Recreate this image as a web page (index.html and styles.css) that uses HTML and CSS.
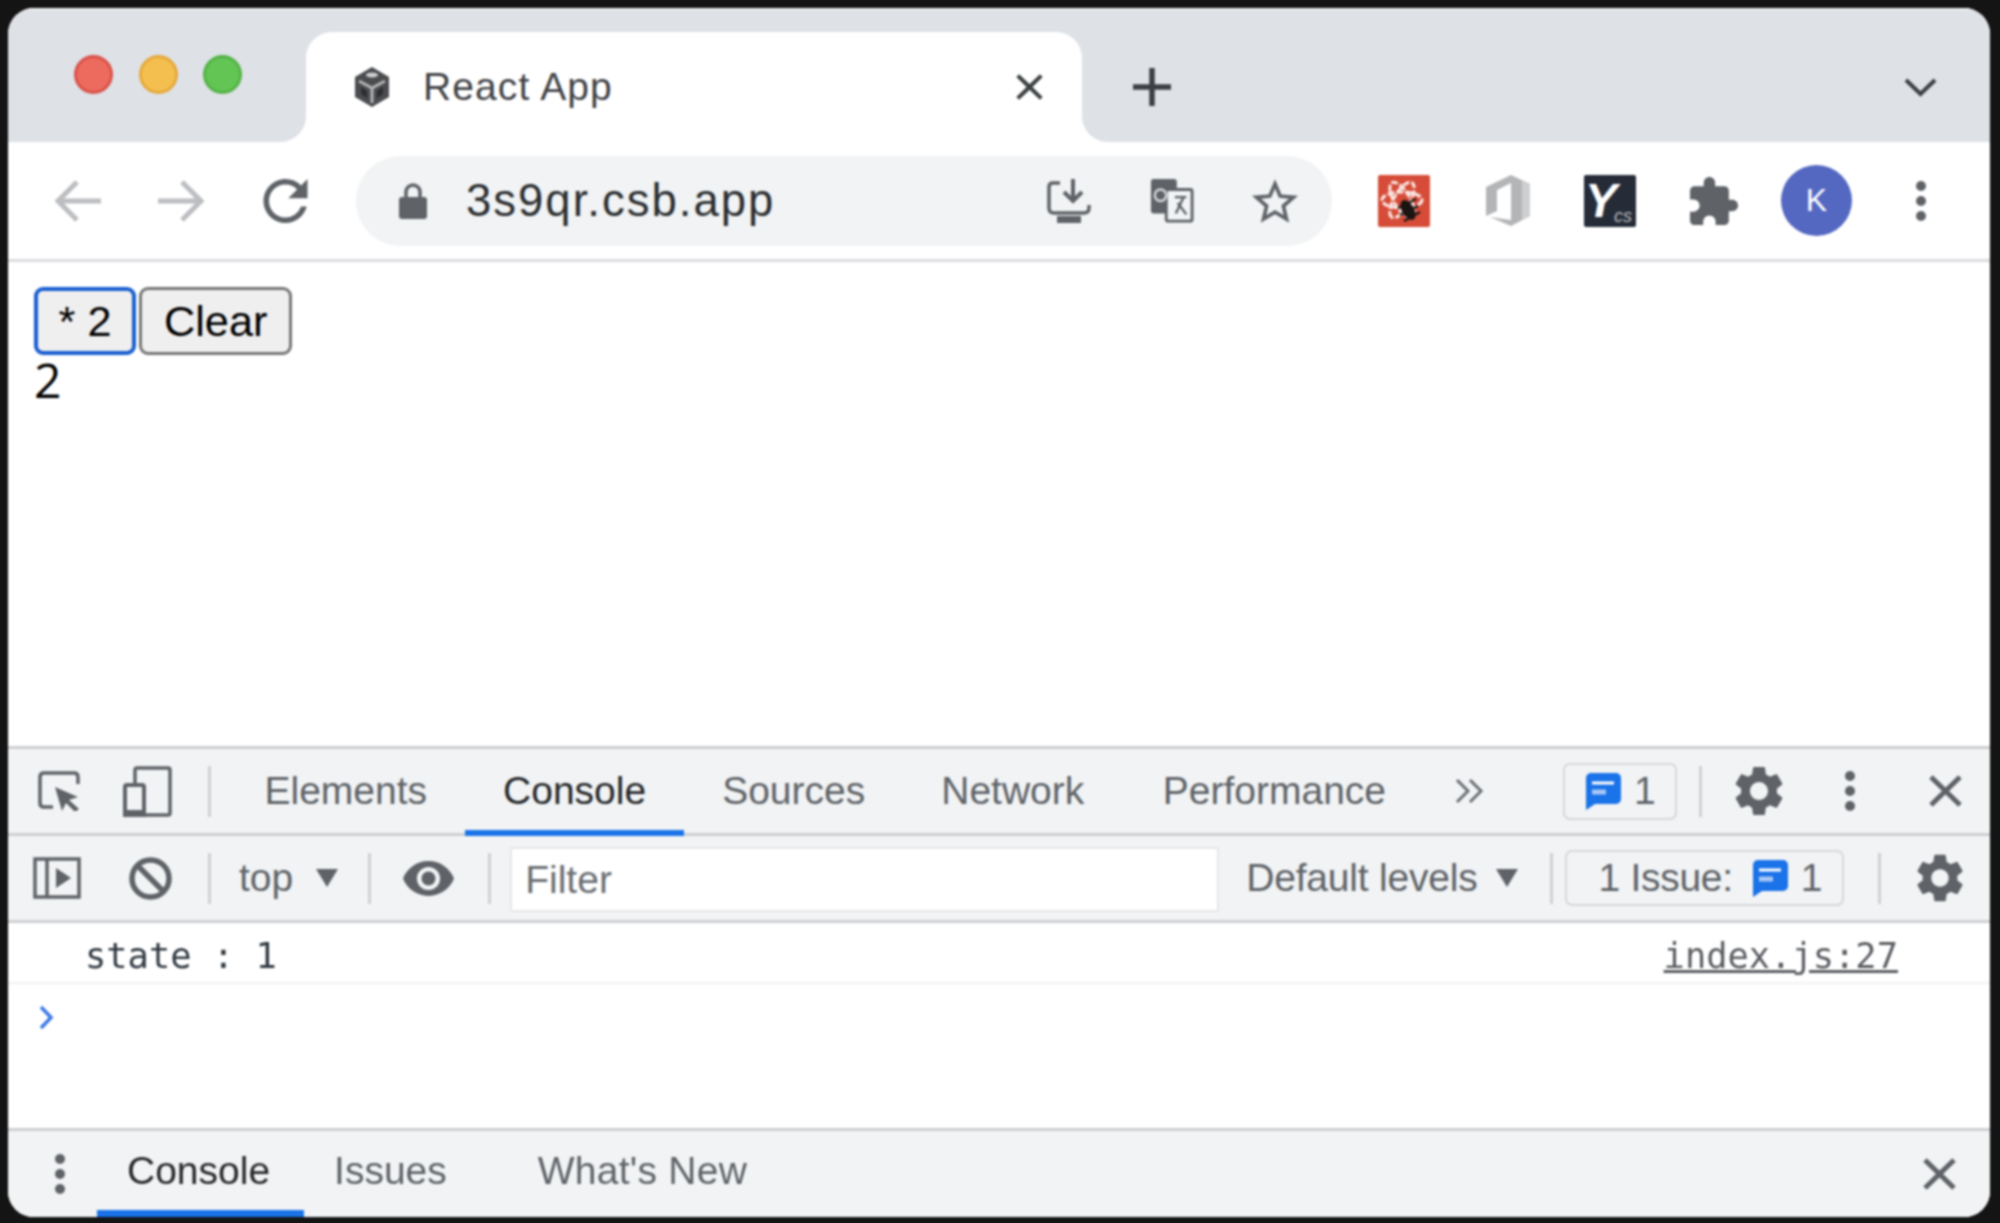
FILE: index.html
```html
<!DOCTYPE html>
<html lang="en">
<head>
<meta charset="utf-8">
<title>React App</title>
<link rel="stylesheet" href="styles.css">
</head>
<body>
<svg class="defs" width="0" height="0" aria-hidden="true">
  <symbol id="gear" viewBox="0 0 24 24"><path d="M19.14 12.94c.04-.3.06-.61.06-.94 0-.32-.02-.64-.07-.94l2.03-1.58a.49.49 0 0 0 .12-.61l-1.92-3.32a.488.488 0 0 0-.59-.22l-2.39.96c-.5-.38-1.03-.7-1.62-.94l-.36-2.54a.484.484 0 0 0-.48-.41h-3.84c-.24 0-.43.17-.47.41l-.36 2.54c-.59.24-1.13.57-1.62.94l-2.39-.96c-.22-.08-.47 0-.59.22L2.74 8.87c-.12.21-.08.47.12.61l2.03 1.58c-.05.3-.09.63-.09.94s.02.64.07.94l-2.03 1.58a.49.49 0 0 0-.12.61l1.92 3.32c.12.22.37.29.59.22l2.39-.96c.5.38 1.03.7 1.62.94l.36 2.54c.05.24.24.41.48.41h3.84c.24 0 .44-.17.47-.41l.36-2.54c.59-.24 1.13-.56 1.62-.94l2.39.96c.22.08.47 0 .59-.22l1.92-3.32c.12-.22.07-.47-.12-.61l-2.01-1.58zM12 15.6c-1.98 0-3.6-1.62-3.6-3.6s1.62-3.6 3.6-3.6 3.6 1.62 3.6 3.6-1.62 3.6-3.6 3.6z"/></symbol>
  <symbol id="dots" viewBox="0 0 12 42"><circle cx="6" cy="6" r="5"/><circle cx="6" cy="21" r="5"/><circle cx="6" cy="36" r="5"/></symbol>
  <symbol id="cross" viewBox="0 0 33 32"><path d="M2 2 31 30M31 2 2 30" fill="none" stroke="currentColor" stroke-width="5"/></symbol>
  <symbol id="chat" viewBox="0 0 35 37"><path d="M5 0h25a5 5 0 0 1 5 5v21a5 5 0 0 1-5 5H9l-9 6V5a5 5 0 0 1 5-5z" fill="#1a73e8"/><path d="M6 10h22" stroke="#fff" stroke-width="3"/><path d="M6 19h14" stroke="#a9c8f5" stroke-width="5"/></symbol>
  <symbol id="caret" viewBox="0 0 22 18"><path d="M0 0h22L11 18z"/></symbol>
</svg>

<div class="window">
  <header class="tabstrip">
    <div class="lights">
      <span class="light light-red"></span>
      <span class="light light-yellow"></span>
      <span class="light light-green"></span>
    </div>
    <div class="tab">
      <svg class="favicon" viewBox="0 0 40 40">
        <path d="M20 0 37 10V30L20 40 3 30V10z" fill="#4a4c4f"/>
        <ellipse cx="20" cy="8" rx="6" ry="2.500" fill="#cfcfcf"/>
        <path d="M20 21V36M7 14 20 21 33 14" stroke="#b4b4b4" stroke-width="3" fill="none"/>
        <path d="M9 20 15 24V31L9 27zM31 20 25 24V31L31 27z" fill="#2c2e30"/>
      </svg>
      <span class="tab-title">React App</span>
      <svg class="tab-close"><use href="#cross"/></svg>
    </div>
    <div class="strip-tools">
      <svg class="new-tab" viewBox="0 0 38 38"><path d="M19 0V38M0 19H38" stroke="#3c4043" stroke-width="5.500"/></svg>
      <svg class="tab-list" viewBox="0 0 33 19"><path d="M2 2 16.500 16 31 2" fill="none" stroke="#3c4043" stroke-width="4"/></svg>
    </div>
  </header>

  <nav class="toolbar">
    <svg class="nav-icon" viewBox="0 0 47 44"><path d="M47 22H5M23 3 4 22 23 41" fill="none" stroke="#bcbec1" stroke-width="5"/></svg>
    <svg class="nav-icon nav-next" viewBox="0 0 47 44"><path d="M0 22H42M24 3 43 22 24 41" fill="none" stroke="#bcbec1" stroke-width="5"/></svg>
    <svg class="nav-icon nav-next" viewBox="4 4 16 16"><path fill="#5f6368" d="M17.650 6.350A7.958 7.958 0 0 0 12 4c-4.420 0-7.990 3.580-7.990 8s3.570 8 7.990 8c3.730 0 6.840-2.550 7.730-6h-2.080A5.990 5.990 0 0 1 12 18c-3.310 0-6-2.690-6-6s2.690-6 6-6c1.660 0 3.140.69 4.220 1.780L13 11h7V4l-2.350 2.350z"/></svg>
    <div class="omnibox">
      <svg class="lock" viewBox="0 0 28 36"><rect y="14" width="28" height="22" rx="3" fill="#5f6368"/><path d="M7 16V9a7 7 0 0 1 14 0v7" fill="none" stroke="#5f6368" stroke-width="3.500"/></svg>
      <span class="url">3s9qr.csb.app</span>
      <div class="omni-actions">
        <svg class="omni-icon" viewBox="0 0 46 44"><path d="M14 4H7Q3 4 3 8V29Q3 34 8 34H38Q43 34 43 29V26" fill="none" stroke="#5f6368" stroke-width="3.500"/><path d="M27 0V21M18 13 27 22 36 13" fill="none" stroke="#5f6368" stroke-width="4"/><rect x="11" y="37" width="24" height="7" fill="#5f6368"/></svg>
        <svg class="omni-icon" viewBox="0 0 46 46"><rect x="1" width="27" height="36" rx="3" fill="#5f6368"/><rect x="17" y="11" width="27" height="33" rx="2" fill="#f1f3f4" stroke="#5f6368" stroke-width="3"/><circle cx="11" cy="17" r="6" fill="none" stroke="#d5d7d9" stroke-width="2.500"/><path d="M26 19H38M35 19 27 36M29 25 38 37" fill="none" stroke="#5f6368" stroke-width="2.500"/></svg>
        <svg class="omni-icon" viewBox="2 2 20 19"><path fill="#5f6368" d="M22 9.240l-7.190-.62L12 2 9.190 8.630 2 9.240l5.460 4.730L5.820 21 12 17.270 18.180 21l-1.630-7.030L22 9.240zM12 15.400l-3.760 2.270 1-4.280-3.320-2.880 4.380-.38L12 6.100l1.710 4.040 4.380.38-3.320 2.880 1 4.280L12 15.400z"/></svg>
      </div>
    </div>
    <svg class="ext ext-bug" viewBox="0 0 52 52">
      <rect width="52" height="52" rx="2" fill="#d64c38"/>
      <g fill="none" stroke="#fbe9e6" stroke-width="3" stroke-dasharray="7 2">
        <ellipse cx="24" cy="25" rx="20" ry="8"/>
        <ellipse cx="24" cy="25" rx="20" ry="8" transform="rotate(60 24 25)"/>
        <ellipse cx="24" cy="25" rx="20" ry="8" transform="rotate(120 24 25)"/>
      </g>
      <ellipse cx="30" cy="35" rx="6" ry="11" fill="#1b1512" transform="rotate(-30 30 35)"/>
      <path d="M20 33 38 24M22 40 40 31M26 46 42 37" stroke="#1b1512" stroke-width="2.500"/>
    </svg>
    <svg class="ext ext-office" viewBox="0 0 44 51">
      <path d="M25 0 44 9V41L25 51 4 42 25 45V8L11 15V36L0 41V12z" fill="#b3b5b7"/>
      <path d="M36 6 44 9V41L36 45z" fill="#cdcfd1"/>
    </svg>
    <svg class="ext ext-yoast" viewBox="0 0 52 52">
      <rect width="52" height="52" rx="2" fill="#252c38"/>
      <text class="ext-y" x="1" y="42">Y</text>
      <text class="ext-cs" x="30" y="47">cs</text>
    </svg>
    <svg class="ext ext-puzzle" viewBox="2 1 21 21"><path fill="#5f6368" d="M20.500 11H19V7c0-1.100-.9-2-2-2h-4V3.500C13 2.120 11.880 1 10.500 1S8 2.120 8 3.500V5H4c-1.100 0-1.990.9-1.990 2v3.800H3.500c1.490 0 2.700 1.210 2.700 2.700s-1.210 2.700-2.700 2.700H2V20c0 1.100.9 2 2 2h3.800v-1.500c0-1.490 1.210-2.700 2.700-2.700 1.490 0 2.700 1.210 2.700 2.700V22H17c1.100 0 2-.9 2-2v-4h1.500c1.380 0 2.500-1.120 2.500-2.500S21.880 11 20.500 11z"/></svg>
    <span class="avatar">K</span>
    <svg class="menu-dots"><use href="#dots"/></svg>
  </nav>

  <main class="page">
    <div class="page-buttons">
      <button class="btn btn-focus" type="button">* 2</button>
      <button class="btn" type="button">Clear</button>
    </div>
    <div class="count">2</div>
  </main>

  <section class="devtools">
    <div class="dt-tabs">
      <svg class="dt-inspect" viewBox="0 0 44 40"><path d="M15 36H6Q2 36 2 32V6Q2 2 6 2H36Q40 2 40 6V13" fill="none" stroke="#5f6368" stroke-width="3.500"/><path d="M17 16 40 26 31 29 41 38 37 41 28 32 24 40z" fill="#5f6368"/></svg>
      <svg class="dt-device" viewBox="0 0 49 51"><path d="M12 17V4Q12 2 14 2H45Q47 2 47 4V47Q47 49 45 49H22" fill="none" stroke="#5f6368" stroke-width="3.500"/><rect x="2" y="19" width="19" height="30" rx="2" fill="none" stroke="#5f6368" stroke-width="4"/><rect x="0" y="44" width="23" height="7" fill="#5f6368"/></svg>
      <span class="dt-sep dt-sep-first"></span>
      <div class="dt-tablist">
        <span class="dt-tab">Elements</span>
        <span class="dt-tab dt-tab-active">Console</span>
        <span class="dt-tab">Sources</span>
        <span class="dt-tab">Network</span>
        <span class="dt-tab dt-tab-perf">Performance</span>
      </div>
      <svg class="dt-more" viewBox="0 0 30 26"><path d="M2 2 13 13 2 24M15 2 26 13 15 24" fill="none" stroke="#6c7074" stroke-width="3"/></svg>
      <div class="dt-badge">
        <svg class="chat"><use href="#chat"/></svg>
        <span>1</span>
      </div>
      <span class="dt-sep dt-sep-badge"></span>
      <svg class="gear gear-top"><use href="#gear"/></svg>
      <svg class="dt-dots"><use href="#dots"/></svg>
      <svg class="dt-close"><use href="#cross"/></svg>
    </div>

    <div class="dt-filter">
      <svg class="dt-sidebar" viewBox="0 0 48 42"><rect x="2" y="2" width="44" height="38" fill="none" stroke="#5f6368" stroke-width="3.500"/><path d="M14 2V40" stroke="#5f6368" stroke-width="3.500"/><path d="M23 11 38 21 23 31z" fill="#5f6368"/></svg>
      <svg class="dt-block" viewBox="0 0 43 43"><circle cx="21.500" cy="21.500" r="18.500" fill="none" stroke="#5f6368" stroke-width="5.500"/><path d="M8 8 35 35" stroke="#5f6368" stroke-width="5.500"/></svg>
      <span class="dt-sep dt-sep-block"></span>
      <span class="dt-top">top</span>
      <svg class="caret caret-top"><use href="#caret"/></svg>
      <span class="dt-sep dt-sep-top"></span>
      <svg class="dt-eye" viewBox="1 4.500 22 15"><path fill="#5f6368" d="M12 4.500C7 4.500 2.730 7.610 1 12c1.730 4.390 6 7.500 11 7.500s9.270-3.110 11-7.500c-1.730-4.390-6-7.500-11-7.500zM12 17c-2.760 0-5-2.240-5-5s2.240-5 5-5 5 2.240 5 5-2.240 5-5 5zm0-8c-1.660 0-3 1.340-3 3s1.340 3 3 3 3-1.340 3-3-1.340-3-3-3z"/></svg>
      <span class="dt-sep dt-sep-eye"></span>
      <div class="dt-input">Filter</div>
      <span class="dt-levels">Default levels</span>
      <svg class="caret caret-levels"><use href="#caret"/></svg>
      <span class="dt-sep dt-sep-levels"></span>
      <div class="dt-issues">
        <span class="dt-issues-label">1 Issue:</span>
        <svg class="chat chat-issues"><use href="#chat"/></svg>
        <span class="dt-issues-count">1</span>
      </div>
      <span class="dt-sep dt-sep-issues"></span>
      <svg class="gear gear-filter"><use href="#gear"/></svg>
    </div>

    <div class="log-row">
      <span>state : 1</span>
      <span class="log-link">index.js:27</span>
    </div>
    <div class="prompt">
      <svg class="prompt-caret" viewBox="0 0 16 25"><path d="M3 2 13 12.500 3 23" fill="none" stroke="#3b78e7" stroke-width="3.500"/></svg>
    </div>

    <div class="drawer">
      <svg class="drawer-dots"><use href="#dots"/></svg>
      <span class="drawer-tab drawer-tab-active">Console</span>
      <span class="drawer-tab">Issues</span>
      <span class="drawer-tab drawer-tab-new">What's New</span>
      <svg class="drawer-close"><use href="#cross"/></svg>
    </div>
  </section>
</div>
</body>
</html>
```

FILE: styles.css
```css
* { box-sizing: border-box; }

html, body { margin: 0; height: 100%; }

body {
  background: #141414;
  padding: 8px 10px 6px 8px;
  overflow: hidden;
  font-family: "Liberation Sans", Arial, sans-serif;
}

svg { display: block; flex: none; }
.defs { position: absolute; }

.window {
  height: 1209px;
  border-radius: 26px;
  overflow: hidden;
  background: #fff;
  display: flex;
  flex-direction: column;
  filter: blur(0.9px);
}

/* Tab strip */
.tabstrip {
  height: 134px;
  flex: none;
  display: flex;
  align-items: flex-end;
  padding-left: 66px;
  background: #dee1e6;
  border-top: 2px solid #f0f1f3;
}

.lights {
  align-self: flex-start;
  margin-top: 45px;
  display: flex;
  gap: 25.5px;
}

.light { width: 39px; height: 39px; border-radius: 50%; border: 3px solid; }
.light-red { background: #ec6a5e; border-color: #d9534a; }
.light-yellow { background: #f4bf4f; border-color: #e5a93e; }
.light-green { background: #62c554; border-color: #55b347; }

.tab {
  position: relative;
  width: 776px;
  height: 110px;
  margin-left: 64px;
  padding: 0 39px 0 46px;
  display: flex;
  align-items: center;
  background: #fff;
  border-radius: 26px 26px 0 0;
}

.tab::before,
.tab::after {
  content: "";
  position: absolute;
  bottom: 0;
  width: 26px;
  height: 26px;
}
.tab::before { left: -26px; background: radial-gradient(circle at 0 0, #dee1e6 25.500px, #fff 26.500px); }
.tab::after { right: -26px; background: radial-gradient(circle at 100% 0, #dee1e6 25.500px, #fff 26.500px); }

.favicon { width: 40px; height: 40px; }

.tab-title {
  margin-left: 31px;
  font-size: 39px;
  letter-spacing: 1.1px;
  color: #3f4246;
}

.tab-close { width: 27px; height: 26px; margin-left: auto; color: #3c4043; }

.strip-tools {
  flex: 1;
  height: 110px;
  display: flex;
  align-items: center;
  padding: 0 53px 0 51px;
}

.new-tab { width: 38px; height: 38px; }
.tab-list { width: 33px; height: 19px; margin-left: auto; }

/* Toolbar */
.toolbar {
  height: 120px;
  flex: none;
  display: flex;
  align-items: center;
  padding-left: 46px;
  background: #fff;
  border-bottom: 3px solid #dadce0;
}

.nav-icon { width: 47px; height: 44px; }
.nav-next { margin-left: 57px; }

.omnibox {
  width: 976px;
  height: 90px;
  margin-left: 47px;
  padding: 0 34px 0 43px;
  display: flex;
  align-items: center;
  border-radius: 45px;
  background: #f1f3f4;
}

.lock { width: 28px; height: 36px; }

.url {
  margin-left: 39px;
  font-size: 45.500px;
  letter-spacing: 2px;
  color: #2b2e31;
}

.omni-actions { margin-left: auto; display: flex; gap: 57px; }
.omni-icon { width: 46px; height: 44px; }

.ext-bug { width: 52px; height: 52px; margin-left: 46px; }
.ext-office { width: 44px; height: 51px; margin-left: 56px; }
.ext-yoast { width: 52px; height: 52px; margin-left: 54px; }
.ext-y { font: bold italic 48px "Liberation Sans", sans-serif; fill: #fff; }
.ext-cs { font: italic 18px "Liberation Sans", sans-serif; fill: #b8babd; }
.ext-puzzle { width: 48px; height: 48px; margin-left: 54px; }

.avatar {
  width: 71px;
  height: 71px;
  margin-left: 43px;
  display: flex;
  align-items: center;
  justify-content: center;
  border-radius: 50%;
  background: #5468c1;
  color: #fff;
  font-size: 32px;
}

.menu-dots { width: 12px; height: 42px; margin-left: 63px; fill: #5f6368; }

/* Page */
.page { flex: 1; padding: 25px 26px 0; background: #fff; }

.page-buttons { display: flex; gap: 3px; }

.btn {
  height: 68px;
  padding: 0 22px;
  border: 3px solid #767676;
  border-radius: 9px;
  background: #efefef;
  color: #000;
  font: 43.300px "Liberation Sans", Arial, sans-serif;
}

.btn-focus { padding: 0 20.5px; border: 4px solid #1a5fd0; }

.count {
  font-family: "Open Sans", sans-serif;
  font-size: 48px;
  line-height: 50px;
  color: #000;
}

/* DevTools */
.devtools { flex: none; display: flex; flex-direction: column; height: 471px; background: #fff; color: #5f6368; font-size: 39px; }

.dt-tabs {
  height: 90px;
  flex: none;
  display: flex;
  align-items: center;
  padding: 0 28px 0 30px;
  background: #f1f3f4;
  border-top: 3px solid #cdcfd2;
  border-bottom: 3px solid #cdcfd2;
}

.dt-inspect { width: 44px; height: 40px; }
.dt-device { width: 49px; height: 51px; margin-left: 41px; }

.dt-sep { width: 3px; height: 51px; flex: none; background: #cfd1d4; }
.dt-sep-first { margin-left: 36px; }

.dt-tablist { display: flex; align-self: stretch; margin-left: 15.5px; margin-bottom: -3px; }

.dt-tab {
  padding: 2px 38px 0;
  display: flex;
  align-items: center;
  border-bottom: 6px solid transparent;
}

.dt-tab-active { color: #26282b; border-bottom-color: #1a73e8; }
.dt-tab-perf { margin-left: 2.5px; }

.dt-more { width: 30px; height: 26px; margin-left: 31px; }

.dt-badge {
  width: 114px;
  height: 57px;
  margin-left: auto;
  padding-left: 21px;
  display: flex;
  align-items: center;
  gap: 13px;
  border: 2px solid #d5d7da;
  border-radius: 7px;
}

.chat { width: 35px; height: 37px; }

.dt-sep-badge { margin-left: 22px; }

.gear { width: 60px; height: 60px; fill: #5f6368; }
.gear-top { margin-left: 27px; }

.dt-dots { width: 12px; height: 42px; margin-left: 55px; fill: #5f6368; }
.dt-close { width: 33px; height: 32px; margin-left: 73px; color: #5f6368; }

.dt-filter {
  height: 87px;
  flex: none;
  display: flex;
  align-items: center;
  padding-left: 25px;
  background: #f1f3f4;
  border-bottom: 3px solid #cdcfd2;
}

.dt-sidebar { width: 48px; height: 42px; }
.dt-block { width: 43px; height: 43px; margin-left: 48px; }
.dt-sep-block { margin-left: 36px; }
.dt-top { margin-left: 28px; }

.caret { width: 22px; height: 18px; fill: #5f6368; }
.caret-top { margin-left: 23px; }

.dt-sep-top { margin-left: 30px; }
.dt-eye { width: 51px; height: 35px; margin-left: 32px; }
.dt-sep-eye { margin-left: 34px; }

.dt-input {
  width: 709px;
  height: 65px;
  margin: 3px 0 0 19px;
  padding-left: 13px;
  display: flex;
  align-items: center;
  background: #fff;
  border: 2px solid #e6e7e9;
  color: #6a6e72;
}

.dt-levels { margin-left: 27px; letter-spacing: -0.2px; }
.caret-levels { margin-left: 18px; }
.dt-sep-levels { margin-left: 32px; }

.dt-issues {
  width: 279px;
  height: 56px;
  margin-left: 12px;
  padding-left: 32px;
  display: flex;
  align-items: center;
  border: 2px solid #d5d7da;
  border-radius: 7px;
}

.dt-issues-label { letter-spacing: -0.3px; }
.chat-issues { margin-left: 20px; }
.dt-issues-count { margin-left: 13px; }
.dt-sep-issues { margin-left: 34px; }
.gear-filter { width: 58px; height: 58px; margin-left: 30px; }

.log-row {
  height: 61px;
  flex: none;
  display: flex;
  align-items: center;
  justify-content: space-between;
  padding: 5px 92px 0 77px;
  border-bottom: 2px solid #f0f1f2;
  color: #303942;
  font-family: "DejaVu Sans Mono", monospace;
  font-size: 35.400px;
}

.log-link { color: #5a5d61; text-decoration: underline; }

.prompt { flex: 1; padding: 21px 0 0 30px; }
.prompt-caret { width: 16px; height: 25px; }

.drawer {
  height: 89px;
  flex: none;
  display: flex;
  align-items: center;
  padding-left: 46px;
  background: #f1f3f4;
  border-top: 3px solid #cdcfd2;
}

.drawer-dots { width: 12px; height: 42px; fill: #5f6368; }

.drawer-tab {
  align-self: stretch;
  padding: 0 34px 0 30px;
  display: flex;
  align-items: center;
  border-bottom: 7px solid transparent;
}

.drawer-tab-active { margin-left: 31px; color: #26282b; border-bottom-color: #1a73e8; }
.drawer-tab-new { margin-left: 27px; letter-spacing: 0.25px; }

.drawer-close { width: 33px; height: 32px; margin: 0 34px 0 auto; color: #5f6368; }
```
